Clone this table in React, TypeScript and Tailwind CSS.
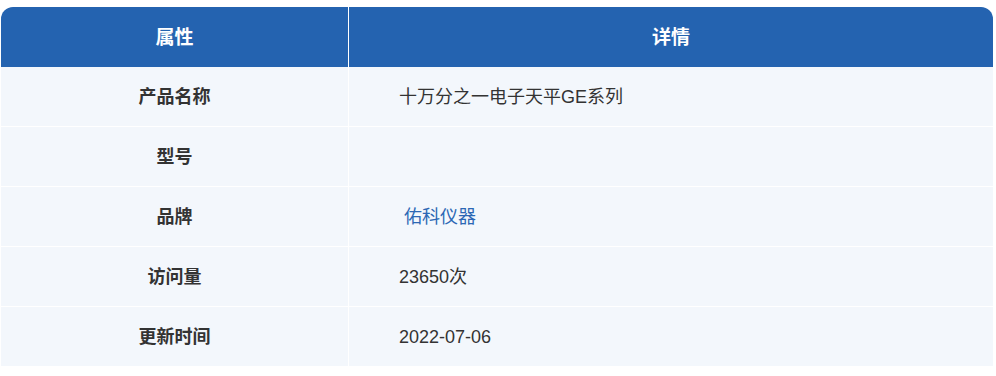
const rows = [
  { label: "产品名称", value: "十万分之一电子天平GE系列" },
  { label: "型号", value: "" },
  { label: "品牌", value: "佑科仪器", link: true },
  { label: "访问量", value: "23650次" },
  { label: "更新时间", value: "2022-07-06" },
];

export default function App() {
  return (
    <div
      className="bg-white pt-[7px] pl-[1px] w-[996px] h-[376px]"
      style={{ fontFamily: '"Liberation Sans", "Noto Sans CJK SC", sans-serif' }}
    >
      <div className="w-[992px] flex flex-col bg-white">
        {/* Header */}
        <div className="grid grid-cols-[347px_1fr] gap-x-px h-[60px]">
          <div className="bg-[#2463b0] rounded-tl-[12px] flex items-center justify-center pt-[2px] text-white font-bold text-[19px]">
            属性
          </div>
          <div className="bg-[#2463b0] rounded-tr-[12px] flex items-center justify-center pt-[2px] text-white font-bold text-[19px]">
            详情
          </div>
        </div>

        {/* Rows */}
        <div className="flex flex-col gap-px">
          {rows.map((row) => (
            <div key={row.label} className="grid grid-cols-[347px_1fr] gap-x-px h-[59px]">
              <div className="bg-[#f3f7fc] flex items-center justify-center pt-[2px] font-bold text-[18px] text-[#333]">
                {row.label}
              </div>
              <div className="bg-[#f3f7fc] flex items-center pl-[50px] pt-[2px] text-[18px] text-[#333]">
                {row.link ? (
                  <a className="ml-[5px] text-[#2c67b4]">{row.value}</a>
                ) : (
                  row.value
                )}
              </div>
            </div>
          ))}
        </div>
      </div>
    </div>
  );
}
